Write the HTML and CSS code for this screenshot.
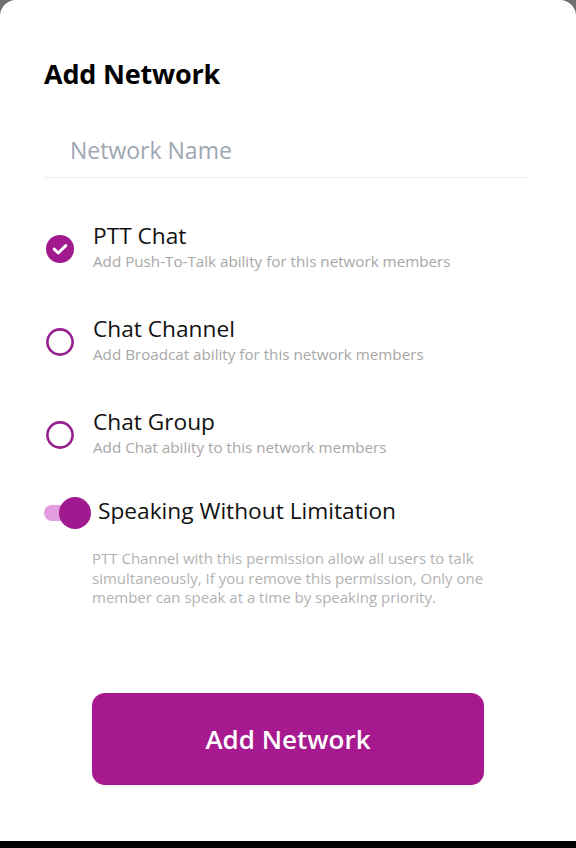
FILE: index.html
```html
<!DOCTYPE html>
<html lang="en">
<head>
<meta charset="utf-8">
<title>Add Network</title>
<link rel="stylesheet" href="styles.css">
</head>
<body>
<div class="sheet">
  <h1 class="title">Add Network</h1>
  <div class="field">
    <input class="field-input" type="text" placeholder="Network Name">
  </div>
  <ul class="options">
    <li class="option">
      <svg class="radio" viewBox="0 0 28 28" width="28" height="28">
        <circle cx="14" cy="14" r="14" fill="#a0198f"/>
        <path d="M8.2 14.2 L12.2 18 L19.8 10.6" fill="none" stroke="#fff" stroke-width="3" stroke-linecap="round" stroke-linejoin="round"/>
      </svg>
      <div class="option-text">
        <div class="option-title">PTT Chat</div>
        <div class="option-sub">Add Push-To-Talk ability for this network members</div>
      </div>
    </li>
    <li class="option">
      <svg class="radio" viewBox="0 0 28 28" width="28" height="28">
        <circle cx="14" cy="14" r="12.6" fill="none" stroke="#961f8e" stroke-width="2.6"/>
      </svg>
      <div class="option-text">
        <div class="option-title">Chat Channel</div>
        <div class="option-sub">Add Broadcat ability for this network members</div>
      </div>
    </li>
    <li class="option">
      <svg class="radio" viewBox="0 0 28 28" width="28" height="28">
        <circle cx="14" cy="14" r="12.6" fill="none" stroke="#961f8e" stroke-width="2.6"/>
      </svg>
      <div class="option-text">
        <div class="option-title">Chat Group</div>
        <div class="option-sub">Add Chat ability to this network members</div>
      </div>
    </li>
  </ul>
  <div class="switch-row">
    <div class="toggle">
      <span class="toggle-track"></span>
      <span class="toggle-thumb"></span>
    </div>
    <div class="switch-title">Speaking Without Limitation</div>
  </div>
  <p class="switch-desc">PTT Channel with this permission allow all users to talk<br>simultaneously, If you remove this permission, Only one<br>member can speak at a time by speaking priority.</p>
  <button class="submit" type="button">Add Network</button>
</div>
<div class="navbar"></div>
</body>
</html>
```

FILE: styles.css
```css
* {
  box-sizing: border-box;
}

html, body {
  margin: 0;
  padding: 0;
  background: #6f6f6f;
  font-family: "Open Sans", "Noto Sans", "DejaVu Sans", sans-serif;
}

.sheet {
  background: #ffffff;
  border-radius: 16px 16px 0 0;
  height: 841px;
  padding: 56px 46px 0 44px;
  display: flex;
  flex-direction: column;
}

.title {
  margin: 0;
  font-size: 27px;
  line-height: 36px;
  font-weight: 700;
  color: #000;
  letter-spacing: -0.2px;
}

.field {
  margin-top: 42px;
  border-bottom: 1px solid #ececec;
  padding-bottom: 11px;
}

.field-input {
  display: block;
  width: 100%;
  border: none;
  outline: none;
  padding: 0 0 0 26px;
  height: 32px;
  font-family: inherit;
  font-size: 23px;
  line-height: 32px;
  color: #222;
  background: transparent;
}

.field-input::placeholder {
  color: #9ea6b2;
}

.options {
  list-style: none;
  margin: 44px 0 0 0;
  padding: 0 0 0 2px;
  display: flex;
  flex-direction: column;
  gap: 44px;
}

.option {
  display: flex;
  align-items: center;
  gap: 19px;
}

.radio {
  flex: none;
  display: block;
  margin-top: 4px;
}

.option-title {
  font-size: 22.7px;
  line-height: 28px;
  color: #111;
}

.option-sub {
  margin-top: 1px;
  font-size: 15.2px;
  line-height: 20px;
  color: #a7a7a7;
}

.switch-row {
  margin-top: 40px;
  display: flex;
  align-items: center;
  gap: 7px;
}

.toggle {
  position: relative;
  width: 47px;
  height: 32px;
  flex: none;
}

.toggle-track {
  position: absolute;
  left: 0;
  top: 8px;
  width: 32px;
  height: 16px;
  border-radius: 8px;
  background: #e39cdf;
}

.toggle-thumb {
  position: absolute;
  right: 0;
  top: 0;
  width: 32px;
  height: 32px;
  border-radius: 50%;
  background: #a0198f;
}

.switch-title {
  font-size: 22.7px;
  line-height: 28px;
  color: #111;
  margin-top: -4px;
}

.switch-desc {
  margin: 20px 0 0 48px;
  font-size: 15px;
  line-height: 19.5px;
  color: #b2b2b2;
}

.submit {
  margin: 85px 0 0 48px;
  width: 392px;
  height: 92px;
  border: none;
  border-radius: 13px;
  background: #a71a8f;
  color: #ffffff;
  font-family: inherit;
  font-size: 26px;
  font-weight: 600;
  padding: 0;
}

.navbar {
  height: 7px;
  background: #000;
}
```
